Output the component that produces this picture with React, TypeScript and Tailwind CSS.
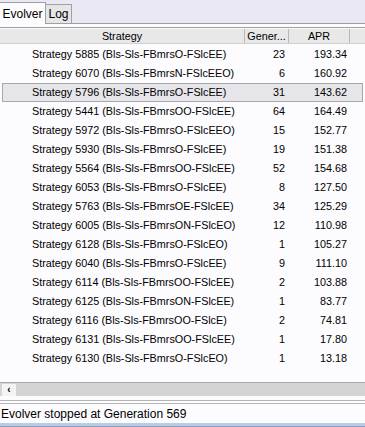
import React from 'react';

const rows: [string, number, string][] = [
  ['Strategy 5885 (Bls-Sls-FBmrsO-FSlcEE)', 23, '193.34'],
  ['Strategy 6070 (Bls-Sls-FBmrsN-FSlcEEO)', 6, '160.92'],
  ['Strategy 5796 (Bls-Sls-FBmrsO-FSlcEE)', 31, '143.62'],
  ['Strategy 5441 (Bls-Sls-FBmrsOO-FSlcEE)', 64, '164.49'],
  ['Strategy 5972 (Bls-Sls-FBmrsO-FSlcEEO)', 15, '152.77'],
  ['Strategy 5930 (Bls-Sls-FBmrsO-FSlcEE)', 19, '151.38'],
  ['Strategy 5564 (Bls-Sls-FBmrsOO-FSlcEE)', 52, '154.68'],
  ['Strategy 6053 (Bls-Sls-FBmrsO-FSlcEE)', 8, '127.50'],
  ['Strategy 5763 (Bls-Sls-FBmrsOE-FSlcEE)', 34, '125.29'],
  ['Strategy 6005 (Bls-Sls-FBmrsON-FSlcEO)', 12, '110.98'],
  ['Strategy 6128 (Bls-Sls-FBmrsO-FSlcEO)', 1, '105.27'],
  ['Strategy 6040 (Bls-Sls-FBmrsO-FSlcEE)', 9, '111.10'],
  ['Strategy 6114 (Bls-Sls-FBmrsOO-FSlcEE)', 2, '103.88'],
  ['Strategy 6125 (Bls-Sls-FBmrsON-FSlcEE)', 1, '83.77'],
  ['Strategy 6116 (Bls-Sls-FBmrsOO-FSlcE)', 2, '74.81'],
  ['Strategy 6131 (Bls-Sls-FBmrsOO-FSlcEE)', 1, '17.80'],
  ['Strategy 6130 (Bls-Sls-FBmrsO-FSlcEO)', 1, '13.18'],
];

const App = () => {
  return (
    <div
      className="w-[365px] h-[427px] flex flex-col bg-[#fcfbfe] text-[10.8px] text-black overflow-hidden"
      style={{ fontFamily: '"Liberation Sans", Arial, sans-serif' }}
    >
      {/* Tabs */}
      <div className="h-[24px] flex items-end bg-[#ebe8f5] border-b border-[#a0a0a0]">
        <div className="h-[22px] w-[46px] flex items-center justify-center bg-[#fcfbfe] border-t border-r border-[#a0a0a0] -mb-px text-[12px]">
          Evolver
        </div>
        <div className="h-[19px] w-[26px] flex items-center justify-center bg-[#e6e6e6] border-t border-r border-[#a0a0a0] text-[12px]">
          Log
        </div>
      </div>

      {/* List */}
      <div className="flex-1 flex flex-col pt-[3px]">
        <div className="h-[17px] flex border-t border-[#a0a0a0] pt-px">
          <div className="flex-1 flex h-full bg-[#e8e8e8] border-b border-[#d0d0d0]">
            <div className="w-[245px] flex items-center justify-center border-r border-[#b8b8b8]">Strategy</div>
            <div className="w-[44px] flex items-center justify-center border-r border-[#b8b8b8]">Gener...</div>
            <div className="w-[61px] flex items-center justify-center border-r border-[#b8b8b8]">APR</div>
            <div className="flex-1" />
          </div>
        </div>
        <div className="flex flex-col pt-[1px]">
          {rows.map(([name, gen, apr], i) => (
            <div
              key={name}
              className={
                'h-[19px] flex items-center mx-[2px] ' +
                (i === 2 ? 'bg-[#e6e6ea] border border-[#a8a8a8]' : 'border border-transparent')
              }
            >
              <div className="w-[241px] pl-[29px] whitespace-nowrap">{name}</div>
              <div className="w-[41px] text-right">{gen}</div>
              <div className="w-[62px] text-right">{apr}</div>
            </div>
          ))}
        </div>
      </div>

      {/* Horizontal scrollbar */}
      <div className="h-[14px] mb-[4px] flex bg-[#d4d4d4] border-t border-[#a8a8a8] px-[2px] pt-px">
        <div className="w-[14px] h-[12px] bg-[#f4f4f4] flex items-center justify-center text-[10px] font-bold leading-none">
          ‹
        </div>
      </div>
      <div className="h-[4px] border-t border-b border-[#b4b4b4]" />

      {/* Status bar */}
      <div className="h-[19px] flex items-center pl-px text-[12px]">Evolver stopped at Generation 569</div>
      <div className="h-[4px] bg-[#b9cde5] border-b border-[#8aa0c0]" />
    </div>
  );
};

export default App;
